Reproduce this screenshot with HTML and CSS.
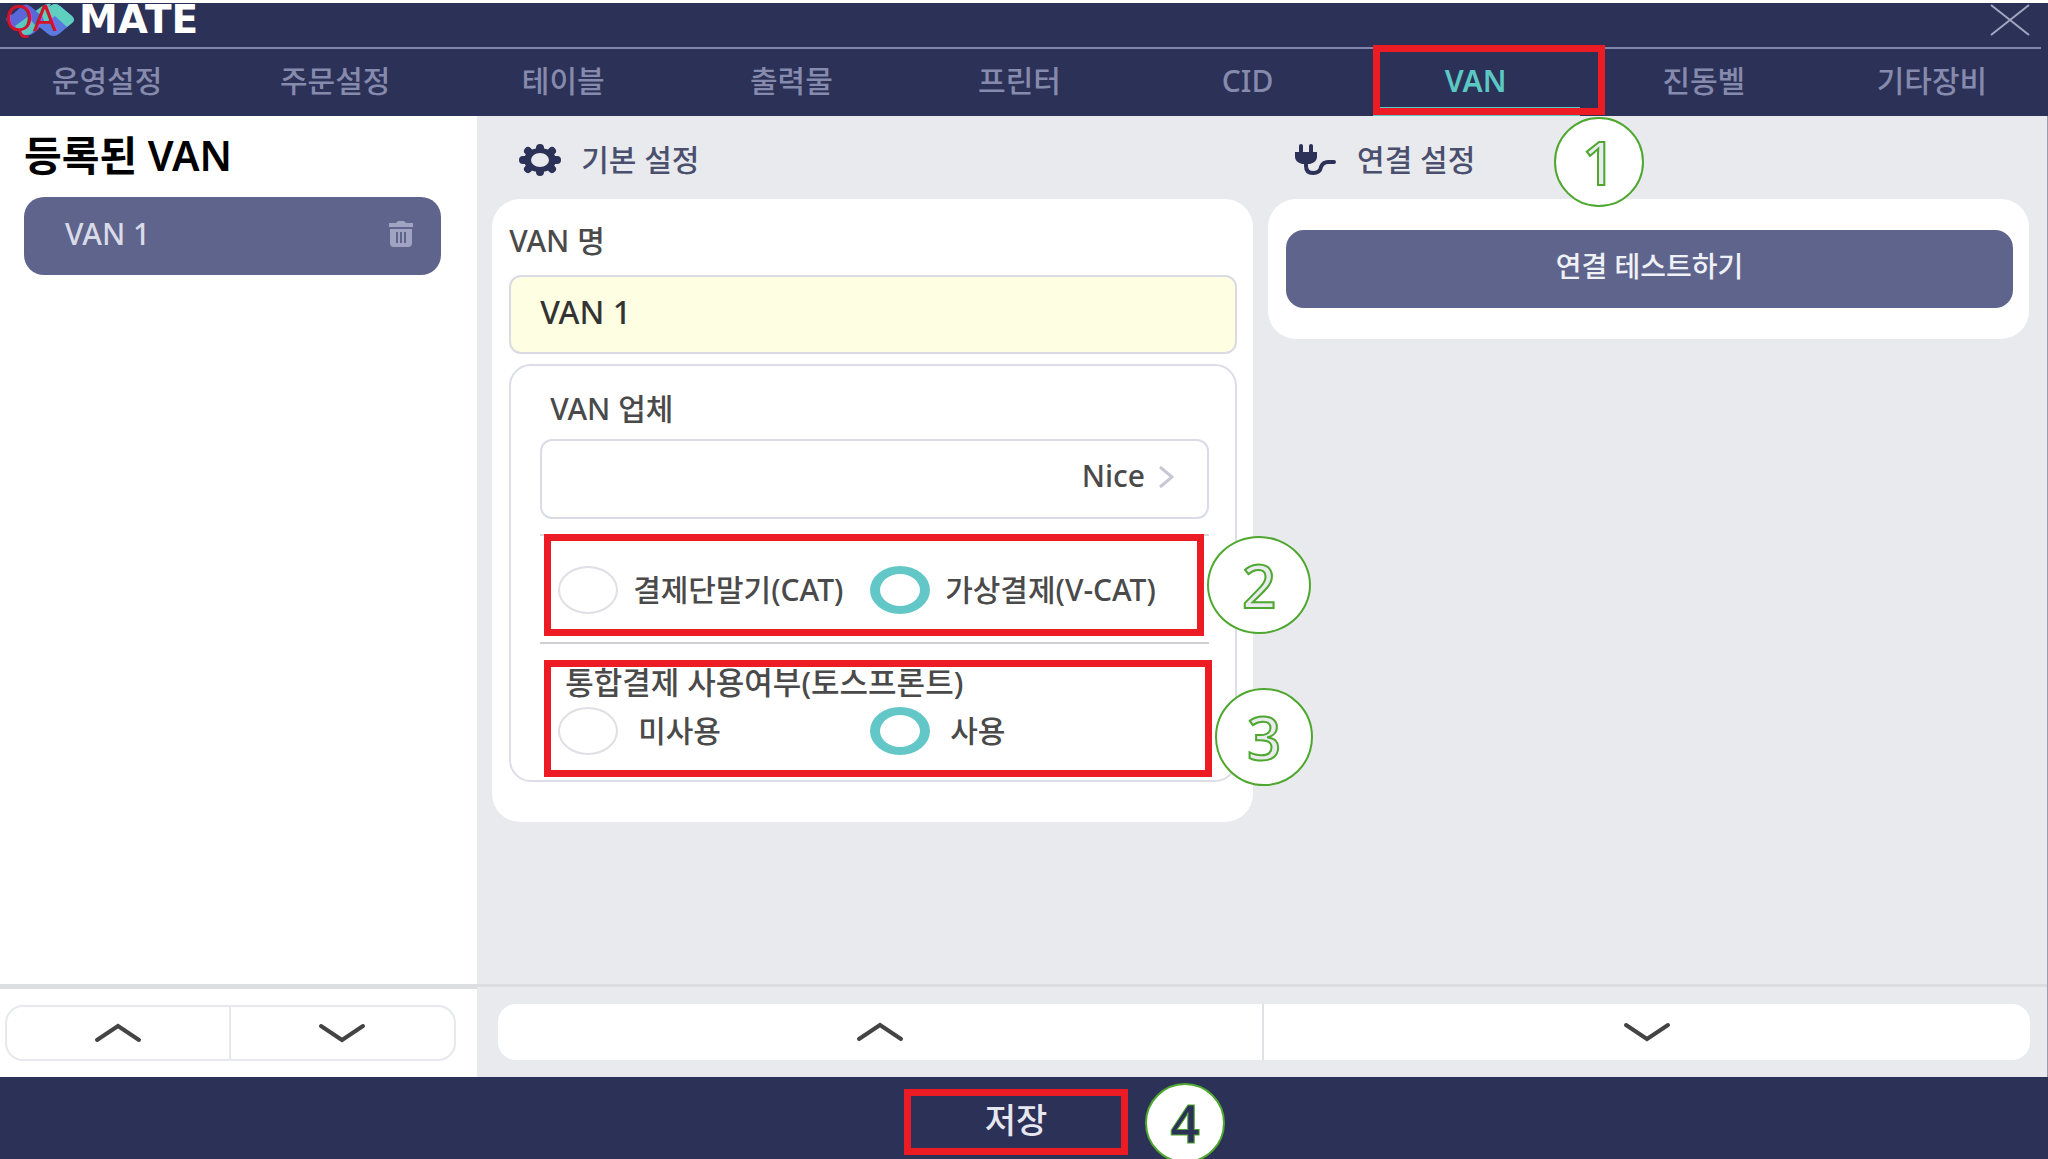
FILE: index.html
```html
<!DOCTYPE html>
<html lang="ko">
<head>
  <meta charset="UTF-8">
  <title>QA MATE</title>
  <meta name="viewport" content="width=device-width, initial-scale=1.0">
  <link rel="stylesheet" href="styles.css">
</head>
<body>
  <header class="header">
    <div class="title-bar">
      <div class="logo">
        <div class="logo-mark">
          <svg class="logo-shape" viewBox="0 0 70 34">
            <path d="M8 11 L17 3 Q21 0 25 3 L42 17 L29 30 Q22 35 16 30 L3 20 Q-1 16 3 13 Z" fill="#5a67d8"/>
            <path d="M10 23 L36 4 Q42 0 46 1 L27 30 Q21 34 15 30 Z" fill="#5bc8c0"/>
            <path d="M18 8 L26 4 L38 14 L30 22 Z" fill="#5a67d8"/>
            <path d="M34 12 L46 3 Q50 -1 55 3 L67 13 Q71 17 67 20 L54 31 Q48 35 43 31 L32 22 Z" fill="#5b7ae0"/>
            <path d="M36 10 L45 3 Q50 -1 55 3 L67 13 Q71 17 67 20 L62 24 L50 13 L40 20 Z" fill="#5fd0c0"/>
          </svg>
          <span class="logo-qa">QA</span>
        </div>
        <span class="logo-name">MATE</span>
      </div>
      <button class="close-btn" aria-label="닫기">
        <svg class="close-icon" viewBox="0 0 42 34"><path d="M2 2 L40 32 M40 2 L2 32"/></svg>
      </button>
    </div>
    <nav class="tabs">
      <button class="tab">운영설정</button>
      <button class="tab">주문설정</button>
      <button class="tab">테이블</button>
      <button class="tab">출력물</button>
      <button class="tab">프린터</button>
      <button class="tab">CID</button>
      <button class="tab active">VAN<span class="mark mark-tab"></span></button>
      <button class="tab">진동벨</button>
      <button class="tab">기타장비</button>
    </nav>
  </header>

  <main class="workspace">
    <aside class="sidebar">
      <div class="sidebar-list">
        <h1 class="sidebar-title">등록된 VAN</h1>
        <div class="van-item">
          <a class="van-link" href="#van1">VAN 1</a>
          <button class="delete-btn" aria-label="삭제">
            <svg class="trash-icon" viewBox="0 0 24 26">
              <path d="M0 2 H7 L9 0 H15 L17 2 H24 V6 H0 Z"/>
              <path fill-rule="evenodd" d="M1 8 H23 V22 Q23 26 19 26 H5 Q1 26 1 22 Z M7 11 V22 H9 V11 Z M11 11 V22 H13 V11 Z M15 11 V22 H17 V11 Z"/>
            </svg>
          </button>
        </div>
      </div>
      <div class="pager pager-side">
        <button class="pager-btn" aria-label="위로"><svg class="arrow" viewBox="0 0 48 20"><path d="M3 17 L24 3 L45 17"/></svg></button>
        <button class="pager-btn" aria-label="아래로"><svg class="arrow" viewBox="0 0 48 20"><path d="M3 3 L24 17 L45 3"/></svg></button>
      </div>
    </aside>

    <section class="content">
      <div class="panels">
        <form class="panel">
          <h2 class="panel-title">
            <svg class="panel-icon" viewBox="0 0 42 32">
              <path fill-rule="evenodd" d="M5 16 A16 12 0 0 1 37 16 A16 12 0 0 1 5 16 Z M12 16 A9 7 0 0 0 30 16 A9 7 0 0 0 12 16 Z" fill="#2c3157"/>
              <path d="M21 4 V5 M21 27 V28 M4 16 H6 M36 16 H38 M9 7 L11 9 M33 7 L31 9 M9 25 L11 23 M33 25 L31 23" fill="none" stroke="#2c3157" stroke-width="8" stroke-linecap="round"/>
            </svg>
            기본 설정
          </h2>
          <div class="card">
            <label class="field-label" for="vanName">VAN 명</label>
            <input class="name-input" type="text" id="vanName" value="VAN 1">
            <div class="group">
              <label class="group-label" for="vanCompany">VAN 업체</label>
              <div class="select-wrap">
                <select class="company-select" id="vanCompany">
                  <option>Nice</option>
                </select>
                <svg class="select-arrow" viewBox="0 0 16 24"><path d="M2 2 L14 12 L2 22"/></svg>
              </div>
              <div class="options options-type">
                <label class="option"><input class="radio" type="radio" name="payType">결제단말기(CAT)</label>
                <label class="option"><input class="radio" type="radio" name="payType" checked>가상결제(V-CAT)</label>
                <span class="mark mark-type"></span>
                <span class="badge badge-type">2</span>
              </div>
              <div class="options-toss">
                <fieldset class="toss-fields">
                  <legend class="toss-title">통합결제 사용여부(토스프론트)</legend>
                  <div class="options">
                    <label class="option"><input class="radio" type="radio" name="toss">미사용</label>
                    <label class="option"><input class="radio" type="radio" name="toss" checked>사용</label>
                  </div>
                </fieldset>
                <span class="mark mark-toss"></span>
                <span class="badge badge-toss">3</span>
              </div>
            </div>
          </div>
        </form>

        <div class="panel">
          <h2 class="panel-title">
            <svg class="panel-icon" viewBox="0 0 42 32">
              <path d="M0 8 H22 V13 Q22 18 15 20 H7 Q0 18 0 13 Z" fill="#2c3157"/>
              <path d="M6 2 V9 M16 2 V9" fill="none" stroke="#2c3157" stroke-width="4" stroke-linecap="round"/>
              <path d="M11 18 V22 Q11 29 18 29 Q25 29 26 23 Q28 18 33 18 H39" fill="none" stroke="#2c3157" stroke-width="4" stroke-linecap="round"/>
            </svg>
            연결 설정
            <span class="badge badge-tab">1</span>
          </h2>
          <div class="card card-test">
            <button class="test-btn">연결 테스트하기</button>
          </div>
        </div>
      </div>
      <div class="pager pager-main">
        <button class="pager-btn" aria-label="위로"><svg class="arrow" viewBox="0 0 48 20"><path d="M3 17 L24 3 L45 17"/></svg></button>
        <button class="pager-btn" aria-label="아래로"><svg class="arrow" viewBox="0 0 48 20"><path d="M3 3 L24 17 L45 3"/></svg></button>
      </div>
    </section>
  </main>

  <footer class="footer">
    <button class="save-btn">저장</button>
    <span class="badge badge-save">4</span>
  </footer>
</body>
</html>
```

FILE: styles.css
```css
* {
  box-sizing: border-box;
}

body {
  margin: 0;
  min-height: 100vh;
  display: flex;
  flex-direction: column;
  border-top: 3px solid #fff;
  font-family: "Noto Sans", "Noto Sans CJK KR", sans-serif;
  font-size: 30px;
  font-weight: 500;
  line-height: 40px;
  color: #4a4a4a;
  background: #e9eaee;
  overflow-x: hidden;
}

button, input, select {
  font: inherit;
  color: inherit;
  margin: 0;
}

button {
  border: none;
  background: none;
  padding: 0;
  cursor: pointer;
}

h1, h2 {
  margin: 0;
}

/* header */
.header {
  background: #2c3157;
}

.title-bar {
  display: flex;
  justify-content: space-between;
  height: 46px;
  margin-right: 7px;
  padding: 0 10px 0 5px;
  border-bottom: 2px solid #8286a8;
}

.logo {
  display: flex;
  gap: 4px;
}

.logo-mark {
  position: relative;
  width: 70px;
  height: 34px;
}

.logo-shape {
  display: block;
  width: 70px;
  height: 34px;
}

.logo-qa {
  position: absolute;
  left: 0;
  top: -4px;
  font-family: "Liberation Sans", sans-serif;
  font-size: 36px;
  color: #d0142c;
}

.logo-name {
  font-family: "DejaVu Sans", sans-serif;
  font-size: 39px;
  line-height: 34px;
  font-weight: bold;
  color: #fff;
}

.close-icon {
  display: block;
  width: 42px;
  height: 34px;
  fill: none;
  stroke: #a3a6c0;
  stroke-width: 2;
}

.close-btn {
  align-self: flex-start;
}

.tabs {
  display: grid;
  grid-template-columns: repeat(9, 1fr);
  margin: 0 2px 0 -7px;
}

.tab {
  position: relative;
  height: 67px;
  padding-bottom: 4px;
  color: #868aac;
}

.tab.active {
  color: #5bc8c4;
  font-weight: 600;
}

.tab.active::after {
  content: "";
  position: absolute;
  left: 11px;
  right: 10px;
  bottom: 0;
  height: 9px;
  background: #5bc8c4;
}

/* red frames and numbered badges */
.mark {
  position: absolute;
  z-index: 1;
  border: 7px solid #ed1c24;
  pointer-events: none;
}

.mark-tab {
  left: 11px;
  right: -15px;
  top: -4px;
  bottom: 1px;
}

.mark-type {
  left: 4px;
  right: 5px;
  top: -2px;
  bottom: 6px;
}

.mark-toss {
  left: 4px;
  right: -3px;
  top: 16px;
  bottom: 3px;
}

.badge {
  position: absolute;
  z-index: 2;
  display: flex;
  align-items: center;
  justify-content: center;
  width: 98px;
  height: 98px;
  border: 2px solid #4ea72e;
  border-radius: 50%;
  background: #fff;
  color: #e9ebee;
  font-size: 60px;
  font-weight: 500;
  line-height: 60px;
  -webkit-text-stroke: 2px #4ea72e;
}

.badge-tab {
  left: 286px;
  top: 1px;
  width: 90px;
  height: 90px;
}

.badge-type {
  width: 104px;
  left: calc(100% - 2px);
  top: 0;
}

.badge-toss {
  left: calc(100% + 6px);
  top: 44px;
}

.badge-save {
  left: calc(50% + 121px);
  top: 6px;
  width: 80px;
  height: 80px;
  color: #2c3157;
  font-size: 52px;
  font-weight: 600;
  -webkit-text-stroke: 1px #4ea72e;
}

/* workspace */
.workspace {
  flex: 1;
  display: flex;
}

.sidebar {
  width: 23.3%;
  display: flex;
  flex-direction: column;
  background: #fff;
}

.sidebar-list {
  flex: 1;
  padding: 12px 36px 0 24px;
}

.sidebar-title {
  font-size: 41px;
  line-height: 54px;
  font-weight: 600;
  color: #000;
}

.van-item {
  display: flex;
  align-items: center;
  justify-content: space-between;
  height: 78px;
  margin-top: 15px;
  padding: 0 28px 4px 41px;
  border-radius: 20px;
  background: #5f648c;
}

.van-link {
  color: #d9dbe8;
  text-decoration: none;
}

.trash-icon {
  display: block;
  width: 24px;
  height: 26px;
  fill: #a0a4c2;
}

.content {
  flex: 1;
  display: flex;
  flex-direction: column;
  border-right: 1px solid #9a9cb2;
}

.panels {
  flex: 1;
  display: grid;
  grid-template-columns: 1fr 1fr;
  gap: 15px;
  align-items: start;
  padding: 0 18px 0 15px;
}

.panel-title {
  position: relative;
  display: flex;
  align-items: center;
  gap: 20px;
  height: 83px;
  padding: 4px 0 0 27px;
  font-size: 30px;
  font-weight: 500;
  color: #4b4f6e;
}

.panel-icon {
  width: 42px;
  height: 32px;
}

.card {
  padding: 22px 16px 40px 17px;
  border-radius: 28px;
  background: #fff;
}

.card-test {
  padding: 31px 16px 31px 18px;
}

.test-btn {
  display: block;
  width: 100%;
  height: 78px;
  padding-bottom: 6px;
  border-radius: 18px;
  background: #5f648c;
  font-size: 28px;
  color: #f0f1f7;
}

.field-label,
.group-label {
  display: block;
}

.name-input {
  display: block;
  width: 100%;
  height: 79px;
  margin-top: 14px;
  padding: 0 29px 6px;
  border: 2px solid #dadbe2;
  border-radius: 12px;
  background: #fefee2;
  font-size: 32px;
  color: #333;
}

.group {
  margin-top: 10px;
  padding: 23px 26px 0 29px;
  border: 2px solid #dcdde6;
  border-radius: 22px;
}

.group-label {
  padding-left: 10px;
}

.select-wrap {
  position: relative;
  margin-top: 10px;
}

.company-select {
  display: block;
  width: 100%;
  height: 80px;
  padding: 0 62px 6px 30px;
  border: 2px solid #dadbe6;
  border-radius: 12px;
  background: #fff;
  appearance: none;
  text-align-last: right;
}

.select-arrow {
  position: absolute;
  right: 35px;
  top: 26px;
  width: 16px;
  height: 24px;
  fill: none;
  stroke: #c6c8d4;
  stroke-width: 3;
}

.options {
  display: grid;
  grid-template-columns: 312px 1fr;
  padding-left: 18px;
}

.options-type {
  position: relative;
  height: 110px;
  margin-top: 15px;
  padding-top: 2px;
  border-top: 2px solid #d8d8dc;
  border-bottom: 2px solid #d0d0d4;
}

.option {
  display: flex;
  align-items: center;
  gap: 15px;
}

.radio {
  appearance: none;
  width: 60px;
  height: 48px;
  border: 2px solid #dfdfe6;
  border-radius: 50%;
  background: #fff;
}

.radio:checked {
  border-color: #64c7c7;
  border-width: 8px 10px;
}

.options-toss {
  position: relative;
  height: 136px;
}

.toss-fields {
  margin: 0;
  padding: 0;
  border: none;
}

.toss-fields .option {
  gap: 20px;
}

.toss-title {
  padding: 18px 0 5px 25px;
  font-size: 31px;
}

/* pagers */
.pager {
  display: grid;
  grid-template-columns: 1fr 1fr;
}

.pager-side {
  padding: 16px 21px 16px 5px;
  border-top: 5px solid #dddee2;
}

.pager-main {
  padding: 17px 17px 17px 21px;
  border-top: 3px solid #dcdde1;
}

.pager-btn {
  display: flex;
  align-items: center;
  justify-content: center;
  height: 56px;
  background: #fff;
}

.pager-btn:first-child {
  border-radius: 18px 0 0 18px;
  border-right: 2px solid #e0e1e6;
}

.pager-btn:last-child {
  border-radius: 0 18px 18px 0;
}

.pager-side .pager-btn {
  border: 2px solid #e8e9ec;
}

.pager-side .pager-btn:last-child {
  border-left: none;
}

.arrow {
  width: 48px;
  height: 20px;
  fill: none;
  stroke: #444;
  stroke-width: 4;
  stroke-linecap: round;
}

/* footer */
.footer {
  position: relative;
  display: flex;
  justify-content: center;
  height: 82px;
  padding: 12px 16px 4px 0;
  background: #2c3157;
  overflow: hidden;
}

.save-btn {
  width: 224px;
  border: 7px solid #ed1c24;
  padding-bottom: 4px;
  font-size: 34px;
  color: #e6e7f0;
}
```
